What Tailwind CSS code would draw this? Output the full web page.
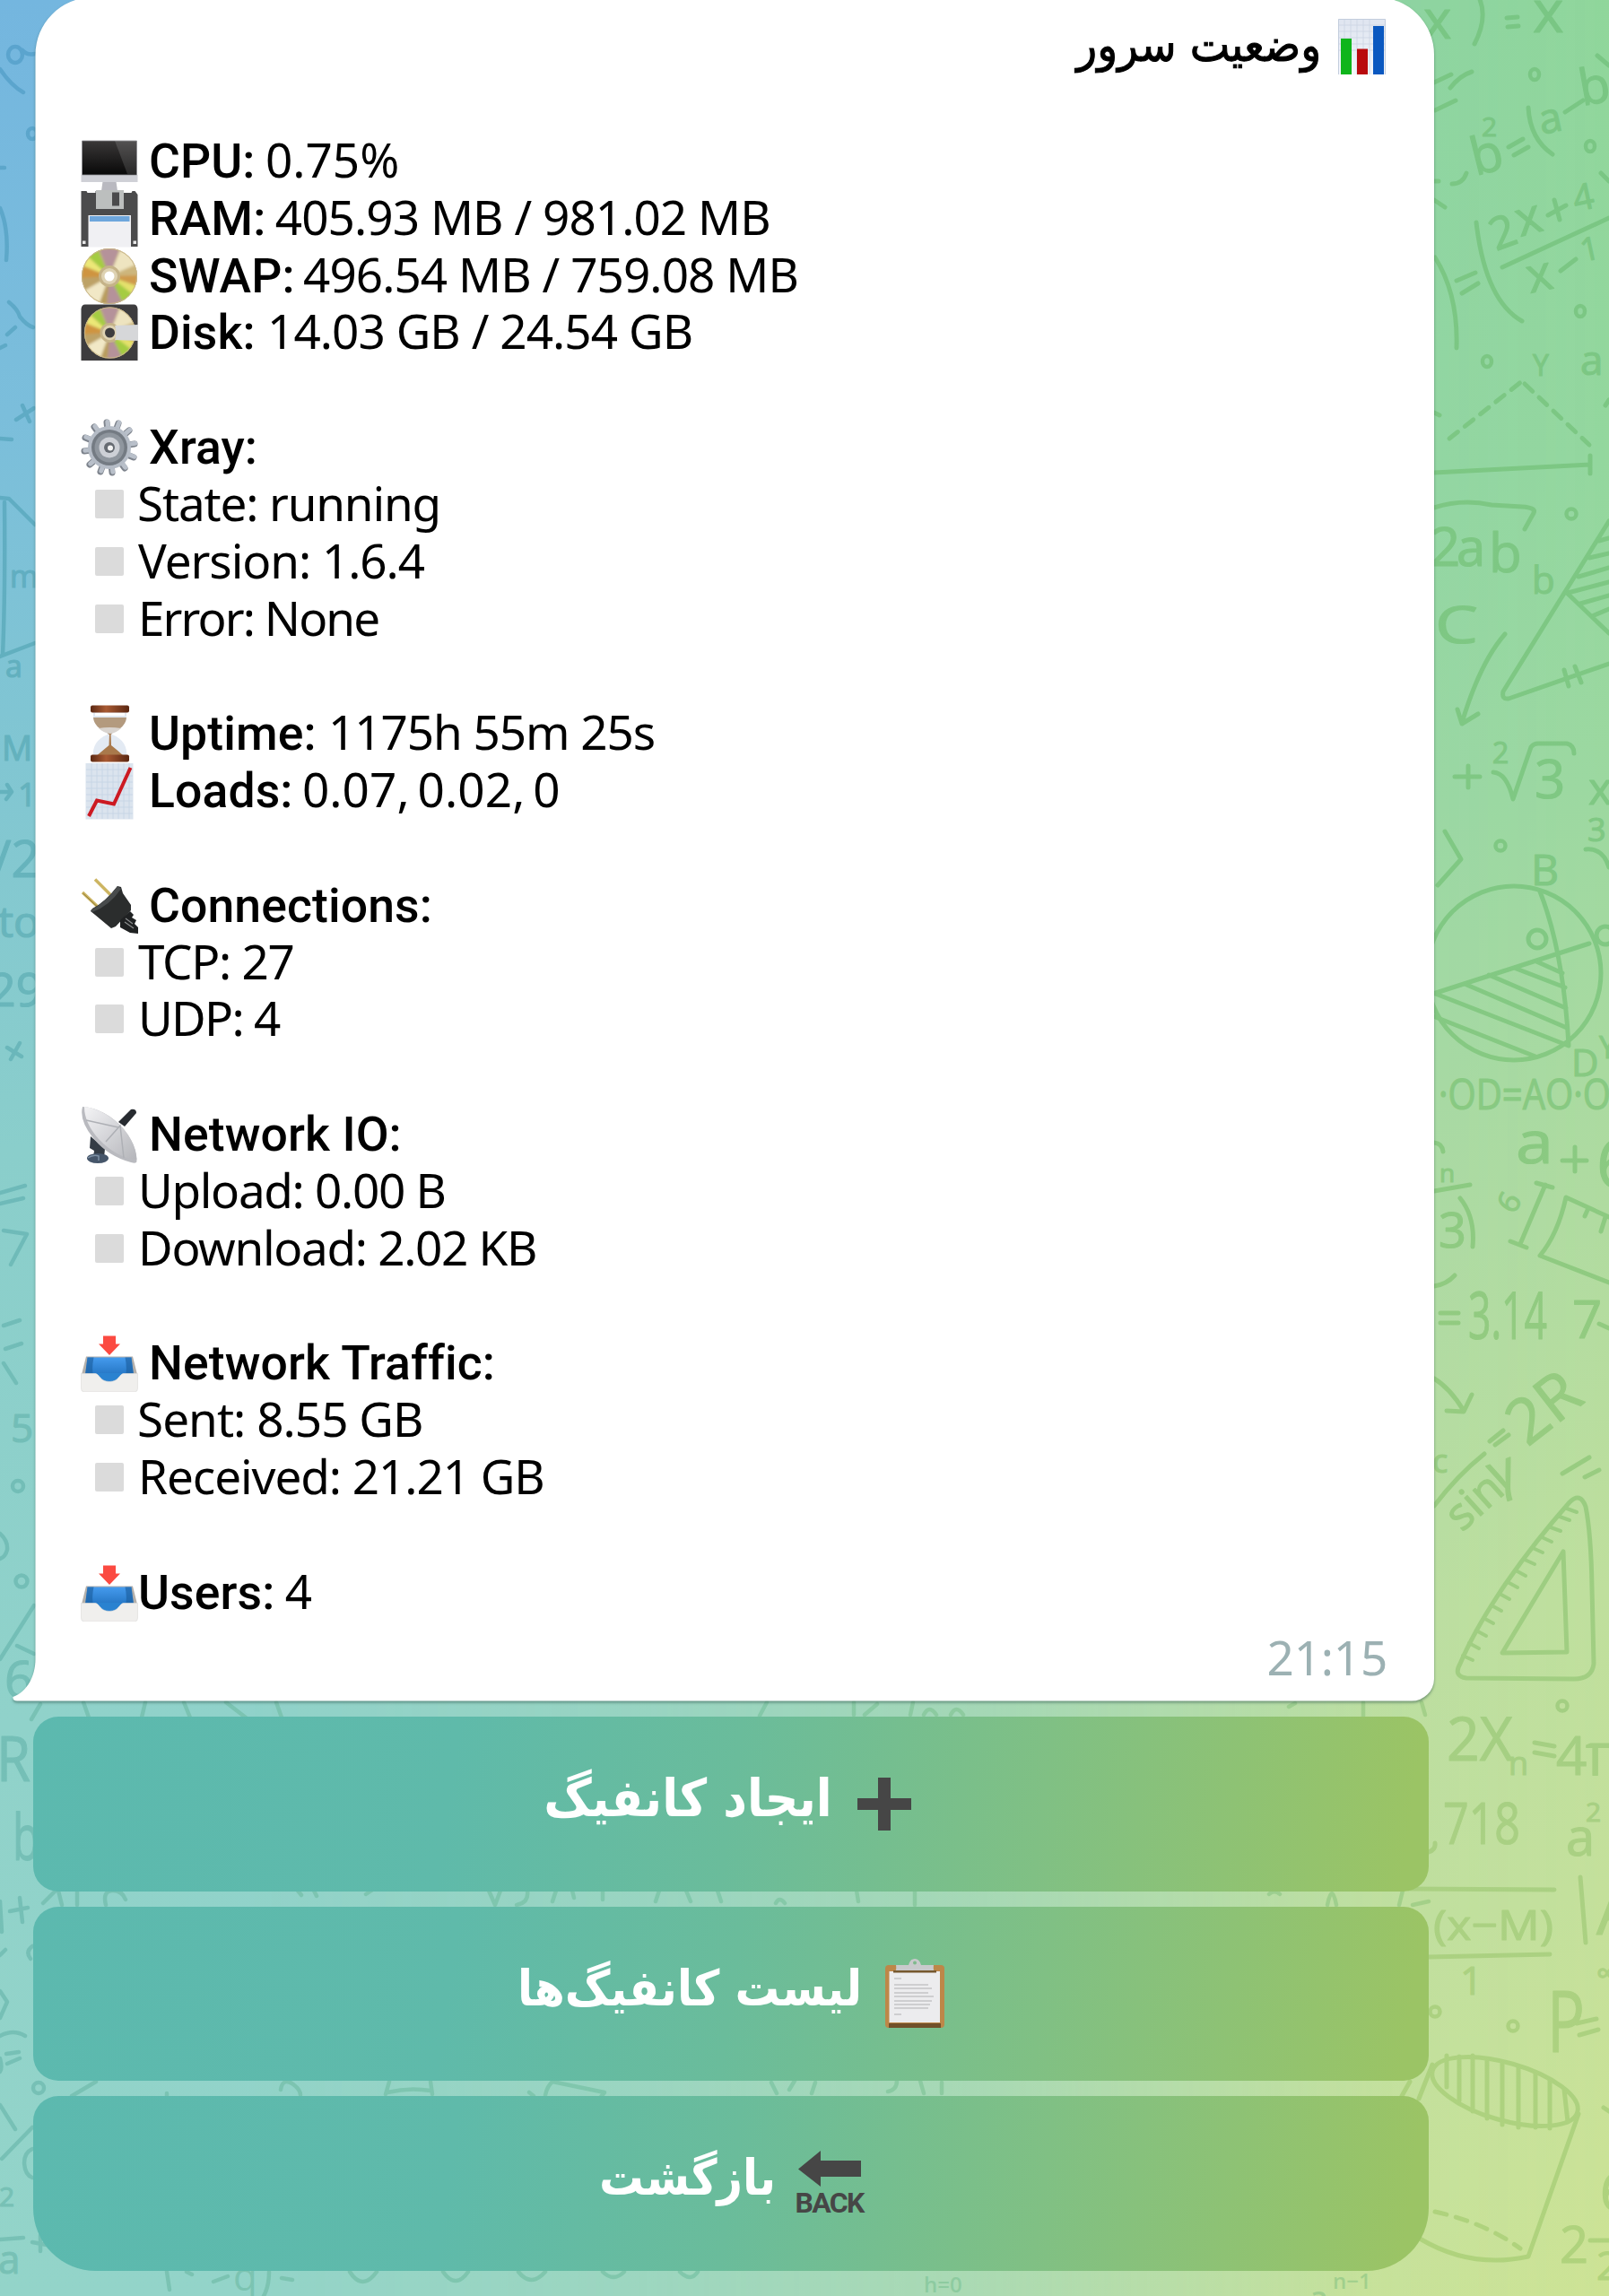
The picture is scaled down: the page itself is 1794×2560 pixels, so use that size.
<!DOCTYPE html>
<html lang="fa">
<head>
<meta charset="utf-8">
<title>وضعیت سرور</title>
<script src="https://cdn.jsdelivr.net/npm/@tailwindcss/browser@4"></script>
</head>
<body class="w-[1794px] h-[2560px] overflow-hidden">
<div class="relative w-[1794px] h-[2560px] overflow-hidden bg-[linear-gradient(180deg,#74b6df_0%,#7bbedb_18%,#80c5d3_31%,#8acecb_50%,#90d2ca_75%,#93d4c9_100%)]">
  <div class="absolute inset-0 bg-[linear-gradient(172deg,#90d69b_8%,#94d79e_27%,#9cd8a0_40%,#b0dba0_57%,#bfdf9d_72%,#c4e09b_84%,#cde395_100%)] [mask-image:linear-gradient(90deg,transparent_15%,rgba(0,0,0,0.18)_40%,rgba(0,0,0,0.42)_60%,rgba(0,0,0,0.9)_85%,black_100%)]"></div>

  <!-- wallpaper doodles -->
  <svg class="absolute inset-0" width="1794" height="2560" viewBox="0 0 1794 2560" fill="none" stroke-linecap="round" stroke-linejoin="round" aria-hidden="true">
    <defs>
      <linearGradient id="dr" gradientUnits="userSpaceOnUse" x1="0" y1="0" x2="0" y2="2560"><stop offset="0" stop-color="#79c684"/><stop offset=".4" stop-color="#80c883"/><stop offset=".6" stop-color="#94cb80"/><stop offset=".8" stop-color="#a9d083"/><stop offset="1" stop-color="#b0d37c"/></linearGradient>
      <linearGradient id="dl" gradientUnits="userSpaceOnUse" x1="0" y1="0" x2="0" y2="2560"><stop offset="0" stop-color="#5aa3cf"/><stop offset=".3" stop-color="#62b0be"/><stop offset=".6" stop-color="#72bdb7"/><stop offset="1" stop-color="#78c1b5"/></linearGradient>
      <linearGradient id="db" gradientUnits="userSpaceOnUse" x1="0" y1="0" x2="1600" y2="0"><stop offset="0" stop-color="#78c1b5"/><stop offset=".5" stop-color="#82c8ab"/><stop offset="1" stop-color="#a4d088"/></linearGradient>
    </defs>
    <g stroke="url(#dr)" stroke-width="5">
      <path d="M1648-5Q1660 18 1644 49M1680 20l12-1M1681 30l12-1M1599 92l19-9M1617 98Q1628 84 1641 80M1600 123l23-11M1619 205Q1631 205 1635 193M1599 202l5 0M1599 223l12 8M1781 62l13 11M1785 193l9 9"/>
      <path d="M1682 164l16-9M1688 173l16-9M1704 120Q1706 155 1731 172M1745 125l20-13M1646 248Q1656 335 1697 358M1675 298L1794 243M1740 302l17-13M1624 313l21-9M1630 327l18-11M1600 287Q1626 328 1624 388M1726 240l20-11M1733 223l6 22"/>
      <path stroke-dasharray="12 10" d="M1616 489L1697 425M1700 428L1772 496"/>
      <path d="M1599 460l6 3M1599 527L1773 518M1773 508v20M1599 566Q1630 556 1663 563L1697 565Q1713 566 1710 572L1700 590M1790 452l4-6"/>
      <path d="M1794 581L1676 771Q1674 780 1682 779L1794 740M1747 661L1794 706M1783 603l11-3M1772 622l22-5M1760 643l34-10M1748 661l46-12M1762 673l32-9M1775 687l19-8M1744 747l5 18M1756 743l7 18"/>
      <path d="M1678 707Q1650 739 1630 806M1625 791L1630 807L1648 796M1622 866h28M1637 854v24M1665 861Q1680 862 1687 891L1707 833Q1710 829 1715 829L1747 829Q1755 831 1755 840M1768 947Q1787 945 1794 967M1611 927L1629 958L1603 987"/>
      <circle cx="1688" cy="1085" r="97"/>
      <path d="M1717 994Q1743 1060 1749 1165M1772 1052L1598 1108M1713 1072l29 13M1688 1079l57 22M1660 1087l86 37M1633 1097L1747 1146M1598 1107L1749 1166M1598 1133L1712 1178"/>
      <circle cx="1714" cy="1047" r="10"/><circle cx="1790" cy="1043" r="10"/>
      <path d="M1742 1294h27M1756 1279v27M1599 1328l40-7M1628 1336Q1645 1357 1642 1390M1599 1434Q1613 1432 1622 1422M1599 1274Q1608 1275 1609 1284M1713 1319l18 5M1723 1321L1695 1387M1684 1384l18 7M1794 1357L1746 1335Q1737 1376 1717 1400L1794 1430M1771 1347l-4 9M1790 1357l-5 16M1606 1464h20M1606 1475h20M1783 1476l11 5"/>
      <path d="M1599 1537Q1617 1548 1632 1573M1613 1573L1632 1574L1641 1555M1661 1607l15-12M1667 1611l15-11M1599 1679Q1625 1645 1655 1621M1742 1643l30-18M1767 1647l16-8"/>
      <path d="M1750 1675Q1762 1663 1768 1680Q1774 1710 1775 1770L1777 1855Q1775 1872 1755 1872L1635 1871Q1620 1869 1628 1855Q1645 1815 1680 1764Q1712 1718 1750 1675ZM1743 1730L1747 1842L1675 1843Z"/>
      <path stroke-width="4" d="M1747 1682l11 4M1739 1691l11 4M1729 1703l11 4M1719 1714l11 5M1709 1726l11 5M1700 1739l11 5M1690 1751l11 6M1681 1764l11 6M1672 1777l11 6M1663 1790l11 6M1654 1804l11 6M1646 1818l11 6M1638 1832l11 6M1631 1846l11 5"/>
      <path d="M1711 1943l22 4M1711 1954l22 4M1570 2106L1733 2107M1593 2182L1728 2179M1762 2093L1768 2166M1758 2256l22-5M1761 2269l21-6M1593 2065q8-3 7-10M1788 2350l6 4"/>
      <ellipse cx="1678" cy="2332" rx="84" ry="32" transform="rotate(16 1678 2332)"/>
      <path d="M1613 2292v35M1627 2293v49M1642 2292v62M1658 2296v66M1675 2300v69M1693 2304v68M1712 2311v61M1728 2320v53M1744 2330l4 36M1760 2357L1704 2516Q1640 2530 1583 2496M1597 2302l-15 38M1572 2321l-9 16M1773 2498h21"/>
      <path stroke-dasharray="13 11" d="M1600 2466Q1655 2478 1695 2507"/>
      <g stroke-width="4.5"><ellipse cx="1711" cy="83" rx="5" ry="6"/><ellipse cx="1773" cy="163" rx="5" ry="6"/><ellipse cx="1762" cy="347" rx="5" ry="6"/><ellipse cx="1658" cy="403" rx="5" ry="6"/><circle cx="1752" cy="573" r="5.5"/><circle cx="1673" cy="943" r="5.5"/><circle cx="1742" cy="1902" r="5.5"/><circle cx="1600" cy="2243" r="5.5"/><circle cx="1687" cy="2259" r="5.5"/></g>
    </g>
    <g fill="url(#dr)" stroke="url(#dr)" stroke-width="1.200" font-family="'Open Sans','Noto Sans',sans-serif" font-size="46">
      <text x="1587" y="43" font-size="60">x</text><text x="1709" y="36" font-size="66">x</text>
      <text x="1645" y="196" font-size="58" transform="rotate(-14 1645 196)">b</text><text x="1652" y="152" font-size="30">2</text><text x="1719" y="150" font-size="46" transform="rotate(-12 1719 150)">a</text><text x="1764" y="118" font-size="56" transform="rotate(-10 1764 118)">b</text>
      <text x="1668" y="280" font-size="50" transform="rotate(-20 1668 280)">2</text><text x="1695" y="264" font-size="54" transform="rotate(-15 1695 264)">x</text><text x="1757" y="236" font-size="40" transform="rotate(-12 1757 236)">4</text><text x="1706" y="327" font-size="54" transform="rotate(-12 1706 327)">x</text><text x="1765" y="292" font-size="36" transform="rotate(-12 1765 292)">1</text>
      <text x="1709" y="419" font-size="32">Y</text><text x="1762" y="418" font-size="46">a</text>
      <text x="1594" y="631" font-size="60">2</text><text x="1624" y="631" font-size="58">a</text><text x="1660" y="638" font-size="60">b</text><text x="1708" y="662" font-size="42">b</text>
      <text x="1600" y="717" font-size="56" textLength="48" lengthAdjust="spacingAndGlyphs">C</text><text x="1664" y="851" font-size="32">2</text><text x="1711" y="890" font-size="60">3</text><text x="1771" y="897" font-size="50">x</text><text x="1770" y="938" font-size="36">3</text><text x="1707" y="987" font-size="48">B</text>
      <text x="1752" y="1200" font-size="42">D</text><text x="1783" y="1180" font-size="34">Y</text>
      <text x="1604" y="1237" textLength="192" lengthAdjust="spacingAndGlyphs" font-size="48">·OD=AO·O</text>
      <text x="1690" y="1297" font-size="66" textLength="42" lengthAdjust="spacingAndGlyphs">a</text><text x="1780" y="1324" font-size="76">6</text><text x="1605" y="1318" font-size="28">n</text><text x="1604" y="1391" font-size="54">3</text><text x="1676" y="1350" font-size="34" transform="rotate(-60 1686 1342)">6</text>
      <text x="1637" y="1493" font-size="74" textLength="88" lengthAdjust="spacingAndGlyphs">3.14</text><text x="1753" y="1492" font-size="58">7</text>
      <text x="1703" y="1614" font-size="70" transform="rotate(-38 1703 1614)">2R</text><text x="1630" y="1709" font-size="50" transform="rotate(-42 1630 1709)">sin</text><text x="1667" y="1664" font-size="58" transform="rotate(-20 1667 1664)">γ</text><text x="1597" y="1642" font-size="36">c</text>
      <text x="1613" y="1963" font-size="68" textLength="74" lengthAdjust="spacingAndGlyphs">2X</text><text x="1682" y="1979" font-size="36">n</text><text x="1735" y="1979" font-size="60">4</text><text x="1768" y="1979" font-size="66">π</text>
      <text x="1609" y="2056" font-size="64" textLength="86" lengthAdjust="spacingAndGlyphs">718</text><text x="1746" y="2069" font-size="58">a</text><text x="1768" y="2031" font-size="30">2</text>
      <text x="1598" y="2163" font-size="46" textLength="134" lengthAdjust="spacingAndGlyphs">(x−M)</text><text x="1628" y="2224" font-size="44">1</text><text x="1780" y="2157" font-size="72">A</text><text x="1725" y="2288" font-size="96" textLength="42" lengthAdjust="spacingAndGlyphs">P</text><text x="1780" y="2212" font-size="34">∞</text>
      <text x="1739" y="2523" font-size="56">2</text><text x="1780" y="2542" font-size="44">2</text><text x="1784" y="2465" font-size="60">6</text>
    </g>
    <g stroke="url(#dl)" stroke-width="4.5">
      <ellipse cx="17" cy="61" rx="8" ry="9"/><path d="M25 56Q30 62 39 60M0 77Q12 95 26 103M0 187h5M0 232Q10 255 7 290M10 337Q20 345 22 353Q30 363 37 365M8 373l9-8M0 388l6-3M18 468l20-13M25 452l8 18M0 489l13 1M0 555L10 556L39 585M5 560Q6 660 3 730M0 732L39 717M0 883h12M8 875l5 8l-6 8"/>
      <ellipse cx="36" cy="149" rx="5" ry="6"/>
      <path d="M0 1330l28-8M0 1342l26-6M4 1372l26 4l-18 34M8 1168l16 10M22 1163l-10 18M4 1478l18-6M6 1504l18-6M4 1520l14 22"/>
      <circle cx="20" cy="1657" r="6"/><circle cx="24" cy="1763" r="6.5"/><path d="M0 1710Q9 1718 8 1728Q6 1736 0 1738M0 1850L38 1790M19 1835l19 9M11 2131l20-4M22 2116l3 27M0 2120l2 34M0 2180l6-6M7 2290l14-2M8 2301l14-6M0 2270Q15 2262 28 2270M0 2310Q3 2306 0 2295M0 2347l17 27M2 2407l34-35M0 2497l26-2M36 2500l16 3M45 2492v18"/>
      <circle cx="43" cy="2328" r="6"/><path d="M0 2220l8 12l-8 18M36 2170Q28 2176 34 2184M36 2396Q27 2400 27 2412Q28 2425 36 2428"/>
    </g>
    <g fill="url(#dl)" stroke="url(#dl)" stroke-width="1.200" font-family="'Open Sans','Noto Sans',sans-serif" font-size="44">
      <text x="11" y="655" font-size="34">m</text><text x="6" y="755" font-size="34">a</text><text x="2" y="848" font-size="38">M</text><text x="20" y="899" font-size="36">1</text>
      <text x="-8" y="978" font-size="56">/2</text><text x="-2" y="1045" font-size="48">to</text><text x="-12" y="1122" font-size="52">29</text><text x="12" y="1608">5</text><text x="5" y="1893" font-size="56">6</text><text x="-4" y="1986" font-size="70" textLength="38" lengthAdjust="spacingAndGlyphs">R</text><text x="14" y="2074" font-size="72" textLength="30" lengthAdjust="spacingAndGlyphs">b</text><text x="-1" y="2460" font-size="30">2</text><text x="-2" y="2535" font-size="44">a</text>
    </g>
    <g stroke="url(#db)" stroke-width="4.5">
      <path d="M45 1900l-10 17M93 1898l6 17M162 1898l-4 17M205 1898l7 17M252 1898l22 17M308 1898l6 17M855 1898l-8 15M952 1898v14M964 1912l14-12M1018 1898l-3 14M1030 1912q6-12 14 0M1060 1912q6-12 14 0M1437 1903l7-4M1520 1898v16M1585 1898l4 14"/>
      <path d="M48 2122l14-14M65 2108l4 16M86 2108v16M118 2124q-4-16 8-16q10 0 14 10M332 2108l4 5M350 2108l3 6M408 2112l6-4M545 2108l7 16l6-16M588 2108q2 14-12 16M620 2108l-4 12M638 2108l2 8M672 2108v10M735 2108l-4 12M770 2120l-5-12M800 2108l4 12M865 2122q4-8 10 0M955 2108l2 12M1020 2108v16M1415 2112q6-6 12 0M1480 2124q5-26 10 0M1560 2124l4-16M1575 2124l18-4"/>
      <path d="M80 2337l27-16M186 2337v-3M313 2330q2-14 14-6q8 6 8 12M430 2335l4-14M432 2333q24-6 48-2M480 2321l2 14M590 2333l5 4M608 2336q2-10 8-15l58 12l-4 5M860 2322l6 12M880 2330l6-10M905 2334l4-12M990 2332q10-2 10-12M1030 2334l-4-14M1050 2322v12"/>
      <path d="M186 2533l3 20M208 2533l6 3M238 2544l16-6M300 2533q0 16-6 27M314 2540l12 2M390 2533q14 22 30 0M494 2533q14 20 28 0M578 2533q14 18 30 0M672 2533q12 12 24 0M758 2533q12 12 20 0"/>
    </g>
    <g fill="url(#db)" font-family="'Open Sans','Noto Sans',sans-serif" font-weight="600"><text x="260" y="2554" font-size="44" font-weight="400">q</text><text x="1486" y="2552" font-size="24">n−1</text><text x="1030" y="2556" font-size="24">h=0</text><text x="1460" y="2575" font-size="36">a</text></g>
  </svg>

  <!-- emoji symbols -->
  <svg class="absolute" width="0" height="0" aria-hidden="true">
    <defs>
      <linearGradient id="scr" x1="0" y1="0" x2="0" y2="1"><stop offset="0" stop-color="#3a3838"/><stop offset="1" stop-color="#080808"/></linearGradient>
      <linearGradient id="steel" x1="0" y1="0" x2="1" y2="1"><stop offset="0" stop-color="#f4f4f6"/><stop offset="1" stop-color="#b4b5ba"/></linearGradient>
      <linearGradient id="paper" x1="0" y1="0" x2="0" y2="1"><stop offset="0" stop-color="#dfe5f0"/><stop offset="1" stop-color="#f2f6fb"/></linearGradient>
      <linearGradient id="trayb" x1="0" y1="0" x2="0" y2="1"><stop offset="0" stop-color="#459bee"/><stop offset="1" stop-color="#2576c4"/></linearGradient>
      <linearGradient id="wood" x1="0" y1="0" x2="1" y2="0"><stop offset="0" stop-color="#5c2812"/><stop offset=".4" stop-color="#a85a33"/><stop offset="1" stop-color="#5a2611"/></linearGradient>
      <filter id="soft"><feGaussianBlur stdDeviation="1.6"/></filter>
      <clipPath id="dc"><circle cx="32" cy="32" r="31"/></clipPath>
      <symbol id="disc" viewBox="0 0 64 64">
        <circle cx="32" cy="32" r="31" fill="#c3ac74"/>
        <g clip-path="url(#dc)"><g filter="url(#soft)">
        <path d="M32 32L15 6A31 31 0 0 1 25 2Z" fill="#c6b07e"/><path d="M32 32L20 0H44Z" fill="#b5929a"/><path d="M32 32L45 0L64 18Z" fill="#eee4c0"/><path d="M32 32L64 18V34Z" fill="#cdb67c"/><path d="M32 32L64 31L63 43Z" fill="#cf9a4c"/><path d="M32 32L63 43L57 53Z" fill="#e4e16c"/><path d="M32 32L58 52L47 64Z" fill="#a5cc43"/><path d="M32 32L48 64L29 64Z" fill="#b5929a"/><path d="M32 32L29 64L20 62Z" fill="#b89c5c"/><path d="M32 32L20 64L2 48Z" fill="#f1e8c6"/><path d="M32 32L4 48L0 34Z" fill="#bda266"/><path d="M32 32L0 34L2 20Z" fill="#cf9440"/><path d="M32 32L2 20L8 10Z" fill="#ece877"/><path d="M32 32L8 10L19 2Z" fill="#a5cc43"/>
        </g></g>
        <circle cx="32" cy="32" r="30.5" fill="none" stroke="#c9b689"/><circle cx="32" cy="32" r="12" fill="#c5b388"/><circle cx="32" cy="32" r="9" fill="#ded2b2"/>
      </symbol>
      <symbol id="inbox" viewBox="0 0 64 64">
        <path d="M25 1.500h14v9h5L32 23 20 10.500h5z" fill="#fb4a41"/>
        <path d="M6 24.500h52l5 20H1z" fill="#b4b0ab"/><path d="M7.500 25.500h49L59 45H5z" fill="url(#trayb)"/><path d="M7.500 25.500h7Q12 38 14 45H5z" fill="#1c5f9f" opacity=".65"/><path d="M56.500 25.500h-7Q52 38 50 45h9z" fill="#1c5f9f" opacity=".65"/>
        <path d="M18 43Q22 53 32 53Q42 53 46 43z" fill="#2a82d0"/>
        <path d="M.5 43.500H16C21 43.500 21 52.500 32 52.500S43 43.500 48 43.500H63.500V60q0 4-3.500 4H4Q.5 64 .5 60z" fill="#f0efed" stroke="#dfdedc" stroke-width=".7"/>
      </symbol>
    </defs>
  </svg>

  <!-- message bubble -->
  <svg class="absolute left-0 top-0 drop-shadow-[0_2px_1.500px_rgba(40,80,70,0.5)]" width="1620" height="1904" viewBox="0 0 1620 1904" aria-hidden="true"><path fill="#fff" d="M39.500 61A64 64 0 0 1 103-3H1535A64 64 0 0 1 1599 61V1872A25 25 0 0 1 1574 1896.500H19Q14 1896.500 14.500 1892C31 1886 39.500 1868 39.500 1850Z"/></svg>

  <main class="relative flex flex-col w-[1560px] ml-[39px] h-[1897px] pl-[51px] pr-[54px] text-black font-['Roboto'] text-[53.500px] leading-[63.840px] tracking-[0.1px]">
    <div dir="rtl" class="flex h-[64px] mt-[20px] shrink-0">
      <svg class="w-[53px] h-[62px] mt-[1px] shrink-0" viewBox="0 0 53 62"><path d="M0 0h53v62H0z" fill="url(#paper)"/><path d="M0 7h53M0 14h53M0 21h53M0 28h53M0 35h53M7 0v62M14 0v62M21 0v62M28 0v62M35 0v62" stroke="#ccd4e3" stroke-width=".8"/><path d="M.5 62V.5h52V62" fill="none" stroke="#c3cddd"/><path d="M3 22h12v40H3z" fill="#0fb51b"/><path d="M21 33.500h12V62H21z" fill="#b90a0d"/><path d="M39 8h12v54H39z" fill="#0a58c0"/></svg>
      <p class="mr-[19px] font-['DejaVu_Sans_Condensed','DejaVu_Sans',sans-serif] font-normal tracking-normal text-[52.500px] leading-[60px] whitespace-nowrap [-webkit-text-stroke:1px_black]">وضعیت سرور</p>
    </div>
    <div class="h-[64px] shrink-0"></div>

    <div class="flex h-[63.840px] shrink-0">
      <svg class="w-16 h-16 mt-[1px]" viewBox="0 0 64 64"><path d="M25 50h14l2 14H23z" fill="#b9b9c0"/><path d="M.5 46h63v8H.5z" fill="#cfd0d6"/><path d="M1.500 8h61v38h-61z" fill="url(#scr)" stroke="#8d8d92" stroke-width=".8"/><path d="M38 8h24v37H52z" fill="#fff" opacity=".13"/></svg>
      <p class="ml-3 whitespace-pre font-medium">CPU: <span class="-ml-[2px] font-['Noto_Sans'] font-normal text-[53px] leading-none tracking-normal">0.75%</span></p>
    </div>
    <div class="flex h-[63.840px] shrink-0">
      <svg class="w-16 h-16" viewBox="0 0 64 64"><path d="M.5 1h6l1 2h9V1h31v2l9 0 1-2h3l3 4v58H.5z" fill="#4b4b4c"/><path d="M17 0h31v21H17z" fill="#bcbfbe"/><path d="M35 2.500h8v15h-8z" fill="#4b4b4c"/><path d="M8.500 28H56v35.500H8.500z" fill="#f0f0f3"/><path d="M10 29h44.500v6H10z" fill="#6ea6dc"/><path d="M2 56.500h3.500v3.500H2zM58.500 56.500H62v3.500h-3.500z" fill="#e8e8e8"/></svg>
      <p class="ml-3 whitespace-pre font-medium">RAM: <span class="-ml-[3px] font-['Noto_Sans'] font-normal text-[53px] leading-none tracking-[-0.93px]">405.93 MB / 981.02 MB</span></p>
    </div>
    <div class="flex h-[63.840px] shrink-0">
      <svg class="w-16 h-16" viewBox="0 0 64 64"><use href="#disc" width="64" height="64"/><circle cx="32" cy="32" r="5.500" fill="#fff"/></svg>
      <p class="ml-3 whitespace-pre font-medium">SWAP: <span class="-ml-[4px] font-['Noto_Sans'] font-normal text-[53px] leading-none tracking-[-0.93px]">496.54 MB / 759.08 MB</span></p>
    </div>
    <div class="flex h-[63.840px] shrink-0">
      <svg class="w-16 h-16" viewBox="0 0 64 64"><path d="M5 .5h54q4 0 4.500 5V63H.5V5.500Q1 .5 5 .5z" fill="#3d3c3e"/><use href="#disc" x="3" y="2.500" width="59" height="59"/><circle cx="32.500" cy="32" r="5.500" fill="#3d3c3e"/><path d="M38 24l26-1v18l-26-1q3-8 0-16z" fill="#d6d7d9"/></svg>
      <p class="ml-3 whitespace-pre font-medium">Disk: <span class="font-['Noto_Sans'] font-normal text-[53px] leading-none tracking-[-0.93px]">14.03 GB / 24.54 GB</span></p>
    </div>
    <div class="h-[63.840px] shrink-0"></div>

    <div class="flex h-[63.840px] shrink-0">
      <svg class="w-16 h-16" viewBox="0 0 64 64"><g stroke="#7d838c" stroke-width="7"><path id="teeth" d="M29 4l6 56M15 9l34 46M5 21l54 22M4 36l56-8M10 51L54 13M22 59L42 5" stroke-linecap="round"/></g><g stroke="#b9c0ca" stroke-width="5" transform="translate(.8 -.8)"><use href="#teeth"/></g><circle cx="32" cy="32" r="24" fill="#b5bcc6"/><circle cx="32" cy="32" r="20" fill="#747b83"/><circle cx="32" cy="32" r="16.500" fill="#8f969e"/><circle cx="32" cy="32" r="11.500" fill="#cdd0d6"/><circle cx="32" cy="32" r="6" fill="#666b72"/><circle cx="33" cy="32.500" r="3" fill="#f4f4f4"/></svg>
      <p class="ml-3 whitespace-pre font-medium">Xray:</p>
    </div>
    <div class="flex h-[63.840px] shrink-0">
      <i class="w-8 h-8 mt-[15px] ml-4 mr-[18px] bg-[#dbdbdb] rounded-[2px]"></i>
      <p class="-ml-[3px] whitespace-pre"><span class="font-['Noto_Sans'] text-[53px] leading-none tracking-[-1.150px]">State: running</span></p>
    </div>
    <div class="flex h-[63.840px] shrink-0">
      <i class="w-8 h-8 mt-[15px] ml-4 mr-[18px] bg-[#dbdbdb] rounded-[2px]"></i>
      <p class="-ml-[2px] whitespace-pre"><span class="font-['Noto_Sans'] text-[53px] leading-none tracking-[-1.050px]">Version: 1.6.4</span></p>
    </div>
    <div class="flex h-[63.840px] shrink-0">
      <i class="w-8 h-8 mt-[15px] ml-4 mr-[18px] bg-[#dbdbdb] rounded-[2px]"></i>
      <p class="-ml-[2px] whitespace-pre"><span class="font-['Noto_Sans'] text-[53px] leading-none tracking-[-1.900px]">Error: None</span></p>
    </div>
    <div class="h-[63.840px] shrink-0"></div>

    <div class="flex h-[63.840px] shrink-0">
      <svg class="w-16 h-16" viewBox="0 0 64 64"><path d="M14 8h37Q53 24 34 32.500Q53 40 51 58H14Q12 40 31 32.500Q12 24 14 8z" fill="#e3eaf3"/><path d="M16 9h33v3H16z" fill="#fff"/><path d="M14 14h37Q50 25 36 30L34 33H31L29 30Q15 25 14 14z" fill="#b39a7e"/><path d="M20 26Q32 24 45 26Q40 31 33 32Q25 31 20 26z" fill="#d9d4cf"/><path d="M32 32h1.500l.5 13Q44 53 49 58H16Q22 53 31.500 45z" fill="#a9794b"/><rect x="11" y=".5" width="43" height="8" rx="2" fill="url(#wood)"/><rect x="11" y="55.500" width="43" height="8" rx="2" fill="url(#wood)"/></svg>
      <p class="ml-3 whitespace-pre font-medium">Uptime: <span class="font-['Noto_Sans'] font-normal text-[53px] leading-none tracking-[-1.050px]">1175h 55m 25s</span></p>
    </div>
    <div class="flex h-[63.840px] shrink-0">
      <svg class="w-16 h-16" viewBox="0 0 64 64"><path d="M5.500 1h53v62.500h-53z" fill="#dbe4ee"/><path d="M12 1v62M18 1v62M24 1v62M30 1v62M36 1v62M42 1v62M48 1v62M54 1v62M6 8h52M6 15h52M6 22h52M6 29h52M6 36h52M6 43h52M6 50h52M6 57h52" stroke="#c6d5e4" stroke-width=".9"/><path d="M9 60L18 42.500L37 46.500L55.500 6" fill="none" stroke="#cc1a22" stroke-width="4"/></svg>
      <p class="ml-3 whitespace-pre font-medium">Loads: <span class="-ml-[3px] font-['Noto_Sans'] font-normal text-[53px] leading-none [word-spacing:-5px]">0.07, 0.02, 0</span></p>
    </div>
    <div class="h-[63.840px] shrink-0"></div>

    <div class="flex h-[63.840px] shrink-0">
      <svg class="w-16 h-16" viewBox="0 0 64 64"><path d="M2 17l17 16M16 2.500l17 17" stroke="#cdb562" stroke-width="3.500"/><path d="M2.500 18l16 15" stroke="#8d7a35" stroke-width="1"/><path d="M41 10l4 1 2 7 9 13v6L39 55l-5 2-18-15-5-4 2-3Q27 28 41 10z" fill="#2b2d2d"/><path d="M41 10l4 3Q32 32 13 39l-2-2Q28 28 41 10z" fill="#484b4c"/><path d="M44 48l11-10 4 4-2 3 5 3-2 4 4 4v7l-9-1-11-6z" fill="#1f2122"/><path d="M50 46l8 6M49 50l10 7" stroke="#8b8d8e" stroke-width="1.200"/></svg>
      <p class="ml-3 whitespace-pre font-medium">Connections:</p>
    </div>
    <div class="flex h-[63.840px] shrink-0">
      <i class="w-8 h-8 mt-[15px] ml-4 mr-[18px] bg-[#dbdbdb] rounded-[2px]"></i>
      <p class="-ml-[2px] whitespace-pre"><span class="font-['Noto_Sans'] text-[53px] leading-none tracking-[-1.300px]">TCP: 27</span></p>
    </div>
    <div class="flex h-[63.840px] shrink-0">
      <i class="w-8 h-8 mt-[15px] ml-4 mr-[18px] bg-[#dbdbdb] rounded-[2px]"></i>
      <p class="-ml-[2px] whitespace-pre"><span class="font-['Noto_Sans'] text-[53px] leading-none tracking-[-1.700px]">UDP: 4</span></p>
    </div>
    <div class="h-[63.840px] shrink-0"></div>

    <div class="flex h-[63.840px] shrink-0">
      <svg class="w-16 h-16" viewBox="0 0 64 64"><path d="M11 34l16 14-1 10H14l1-8-5-3z" fill="#343c45"/><ellipse cx="19" cy="58.500" rx="12" ry="5.500" fill="#46566a"/><path d="M8 58q6-4 12-2v5" fill="none" stroke="#7f92a6" stroke-width="1.500"/><path d="M2 1Q28 3 48 26Q62 43 62.500 62Q62 65 56 63Q30 56 14 36Q-2 16 2 1z" fill="#b9babf"/><path d="M4 1Q28 4 48 26Q62 43 62.500 60Q40 58 20 37Q4 19 4 1z" fill="url(#steel)"/><path d="M6 16L42 24M28 40L44 22L48 58" fill="none" stroke="#aeb0b5" stroke-width="1.500"/><path d="M42 18L56 4q6-1 6 4L49 23z" fill="#272b30"/></svg>
      <p class="ml-3 whitespace-pre font-medium">Network IO:</p>
    </div>
    <div class="flex h-[63.840px] shrink-0">
      <i class="w-8 h-8 mt-[15px] ml-4 mr-[18px] bg-[#dbdbdb] rounded-[2px]"></i>
      <p class="-ml-[2px] whitespace-pre"><span class="font-['Noto_Sans'] text-[53px] leading-none tracking-[-1.300px]">Upload: 0.00 B</span></p>
    </div>
    <div class="flex h-[63.840px] shrink-0">
      <i class="w-8 h-8 mt-[15px] ml-4 mr-[18px] bg-[#dbdbdb] rounded-[2px]"></i>
      <p class="-ml-[2px] whitespace-pre"><span class="font-['Noto_Sans'] text-[53px] leading-none tracking-[-1.300px]">Download: 2.02 KB</span></p>
    </div>
    <div class="h-[63.840px] shrink-0"></div>

    <div class="flex h-[63.840px] shrink-0">
      <svg class="w-16 h-16" viewBox="0 0 64 64"><use href="#inbox"/></svg>
      <p class="ml-3 whitespace-pre font-medium">Network Traffic:</p>
    </div>
    <div class="flex h-[63.840px] shrink-0">
      <i class="w-8 h-8 mt-[15px] ml-4 mr-[18px] bg-[#dbdbdb] rounded-[2px]"></i>
      <p class="-ml-[3px] whitespace-pre"><span class="font-['Noto_Sans'] text-[53px] leading-none tracking-[-0.950px]">Sent: 8.55 GB</span></p>
    </div>
    <div class="flex h-[63.840px] shrink-0">
      <i class="w-8 h-8 mt-[15px] ml-4 mr-[18px] bg-[#dbdbdb] rounded-[2px]"></i>
      <p class="-ml-[2px] whitespace-pre"><span class="font-['Noto_Sans'] text-[53px] leading-none tracking-[-1.050px]">Received: 21.21 GB</span></p>
    </div>
    <div class="h-[63.840px] shrink-0"></div>

    <div class="flex h-[63.840px] shrink-0">
      <svg class="w-16 h-16" viewBox="0 0 64 64"><use href="#inbox"/></svg>
      <p class="whitespace-pre font-medium">Users: <span class="-ml-[2px] font-['Noto_Sans'] font-normal text-[53px] leading-none">4</span></p>
    </div>
    <p class="mt-[8px] -mr-[2px] self-end font-['Noto_Sans'] text-[53px] leading-[64px] tracking-[-0.2px] text-[#9cb1b3]">21:15</p>
  </main>

  <!-- inline keyboard -->
  <div dir="rtl" class="relative flex flex-col gap-[17px] mt-[17px] ml-[37px] w-[1556px] text-white font-['DejaVu_Sans_Condensed','DejaVu_Sans',sans-serif] font-bold text-[55px]">
    <button class="flex justify-center items-center h-[194.500px] pr-2 rounded-[28px] bg-[linear-gradient(98deg,#5cb9af_0%,#5fbaaa_30%,#6abc9b_50%,#80c084_72%,#9bc465_98%)]">
      <svg class="w-[60px] h-[59px] ml-[28px]" viewBox="0 0 60 59"><path d="M23 0h14v23h23v13H37v23H23V36H0V23h23z" fill="#464646"/></svg>
      <span class="whitespace-nowrap text-[58px] mb-3">ایجاد کانفیگ</span>
    </button>
    <button class="flex justify-center items-center h-[194.500px] rounded-[28px] bg-[linear-gradient(98deg,#5cb9af_0%,#5fbaaa_30%,#6abc9b_50%,#80c084_72%,#9bc465_98%)]">
      <svg class="w-[66px] h-[78px] ml-[26px]" viewBox="0 0 66 78"><rect x="0" y="7" width="66" height="70" rx="4" fill="#bd8748"/><path d="M4 72h58v5H4z" fill="#70502b"/><path d="M4.500 14H61v57H4.500z" fill="#ececee"/><path d="M10 22h8M10 29h38M10 33h42M10 38h38M10 42h44M10 47h42M10 51h40M10 55h38M10 62h8" stroke="#c4c4c6" stroke-width="1.500"/><path d="M12 7q1 7-2 7h46q-3 0-2-7H40q-2-7-7-7t-7 7z" fill="#c9cacc"/><path d="M9 13h48v2.500H9z" fill="#76582f"/><circle cx="33" cy="4.500" r="2" fill="#7fb98c"/></svg>
      <span class="whitespace-nowrap mb-3">لیست کانفیگ‌ها</span>
    </button>
    <button class="flex justify-center items-center h-[194.500px] rounded-t-[28px] rounded-b-[70px] bg-[linear-gradient(98deg,#5cb9af_0%,#5fbaaa_30%,#6abc9b_50%,#80c084_72%,#9bc465_98%)]">
      <span dir="ltr" class="flex flex-col items-center w-[75px] ml-[22px]">
        <svg class="w-[70px] h-[40px]" viewBox="0 0 70 40"><path d="M0 20.500L25 0v11h45v18H25v11z" fill="#464646"/></svg>
        <span class="mt-[4px] font-['Roboto'] font-bold text-[32px] leading-[28px] tracking-[-1.700px] text-[#464646]">BACK</span>
      </span>
      <span class="whitespace-nowrap mb-3">بازگشت</span>
    </button>
  </div>
</div>
</body>
</html>
